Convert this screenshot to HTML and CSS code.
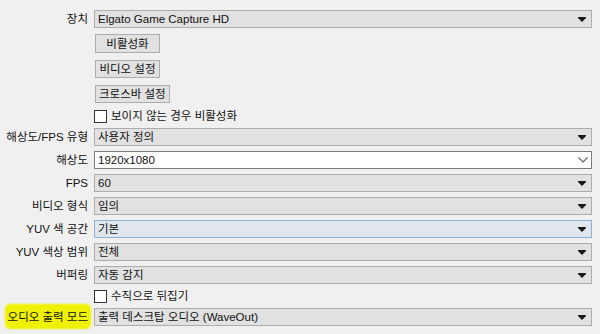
FILE: index.html
```html
<!DOCTYPE html>
<html lang="ko">
<head>
<meta charset="utf-8">
<link rel="stylesheet" href="styles.css">
</head>
<body>
<div class="form">
  <div class="row r-first">
    <div class="label">장치</div>
    <div class="combo"><span class="val">Elgato Game Capture HD</span><svg class="arrow" width="8" height="5" viewBox="0 0 8 5"><path d="M0 0H8V1L4 5L0 1Z" fill="#1a1a1a"/></svg></div>
  </div>
  <div class="row r-btn1">
    <div class="label"></div>
    <div><button class="btn">비활성화</button></div>
  </div>
  <div class="row r-btn">
    <div class="label"></div>
    <div><button class="btn">비디오 설정</button></div>
  </div>
  <div class="row r-btn">
    <div class="label"></div>
    <div><button class="btn">크로스바 설정</button></div>
  </div>
  <div class="row r-check">
    <div class="label"></div>
    <label class="check"><span class="box"></span>보이지 않는 경우 비활성화</label>
  </div>
  <div class="row r-after-check">
    <div class="label">해상도/FPS 유형</div>
    <div class="combo"><span class="val">사용자 정의</span><svg class="arrow" width="8" height="5" viewBox="0 0 8 5"><path d="M0 0H8V1L4 5L0 1Z" fill="#1a1a1a"/></svg></div>
  </div>
  <div class="row">
    <div class="label">해상도</div>
    <div class="combo edit"><span class="val">1920x1080</span><svg class="chev" width="10" height="6" viewBox="0 0 10 6"><path d="M0.5 0.5L5 5L9.5 0.5" fill="none" stroke="#606060" stroke-width="1.1"/></svg></div>
  </div>
  <div class="row">
    <div class="label">FPS</div>
    <div class="combo"><span class="val">60</span><svg class="arrow" width="8" height="5" viewBox="0 0 8 5"><path d="M0 0H8V1L4 5L0 1Z" fill="#1a1a1a"/></svg></div>
  </div>
  <div class="row">
    <div class="label">비디오 형식</div>
    <div class="combo"><span class="val">임의</span><svg class="arrow" width="8" height="5" viewBox="0 0 8 5"><path d="M0 0H8V1L4 5L0 1Z" fill="#1a1a1a"/></svg></div>
  </div>
  <div class="row">
    <div class="label">YUV 색 공간</div>
    <div class="combo focus"><span class="val">기본</span><svg class="arrow" width="8" height="5" viewBox="0 0 8 5"><path d="M0 0H8V1L4 5L0 1Z" fill="#1a1a1a"/></svg></div>
  </div>
  <div class="row">
    <div class="label">YUV 색상 범위</div>
    <div class="combo"><span class="val">전체</span><svg class="arrow" width="8" height="5" viewBox="0 0 8 5"><path d="M0 0H8V1L4 5L0 1Z" fill="#1a1a1a"/></svg></div>
  </div>
  <div class="row">
    <div class="label">버퍼링</div>
    <div class="combo"><span class="val">자동 감지</span><svg class="arrow" width="8" height="5" viewBox="0 0 8 5"><path d="M0 0H8V1L4 5L0 1Z" fill="#1a1a1a"/></svg></div>
  </div>
  <div class="row r-check2">
    <div class="label"></div>
    <label class="check"><span class="box"></span>수직으로 뒤집기</label>
  </div>
  <div class="row r-after-check">
    <div class="label"><span class="hl">오디오 출력 모드</span></div>
    <div class="combo"><span class="val">출력 데스크탑 오디오 (WaveOut)</span><svg class="arrow" width="8" height="5" viewBox="0 0 8 5"><path d="M0 0H8V1L4 5L0 1Z" fill="#1a1a1a"/></svg></div>
  </div>
</div>
</body>
</html>
```
FILE: styles.css
```css
html, body {
  margin: 0;
  padding: 0;
  background: #f0f0f0;
}
body {
  width: 600px;
  height: 334px;
  overflow: hidden;
  font-family: "Liberation Sans", "Noto Sans CJK KR", sans-serif;
  font-size: 11.5px;
  color: #111;
}
.form {
  display: flex;
  flex-direction: column;
  padding-top: 10px;
}
.row {
  display: grid;
  grid-template-columns: 88px 498px;
  column-gap: 6px;
  align-items: center;
  height: 18px;
  margin-top: 5px;
}
.row.r-first { margin-top: 0; }
.row.r-btn1 { margin-top: 6px; height: 19px; }
.row.r-btn { margin-top: 7px; }
.row.r-check { margin-top: 4px; }
.row.r-check2 { margin-top: 3px; }
.row.r-after-check { margin-top: 3px; }
.label {
  text-align: right;
  white-space: nowrap;
  line-height: 18px;
}
.combo {
  box-sizing: border-box;
  height: 18px;
  border: 1px solid #adadad;
  background: #e1e1e1;
  display: flex;
  align-items: center;
  justify-content: space-between;
  padding: 0 4px 0 3px;
}
.combo .val {
  line-height: 16px;
  white-space: nowrap;
}
.combo.edit {
  background: #ffffff;
  border-color: #7a7a7a;
  padding-right: 3px;
}
.combo.focus {
  background: #e2e7ee;
  border-color: #8cb0d6;
}
.arrow { display: block; margin-right: 1px; }
.chev { display: block; }
.btn {
  box-sizing: border-box;
  height: 18px;
  min-width: 65px;
  margin-left: 1px;
  padding: 0 3px;
  border: 1px solid #adadad;
  background: #e1e1e1;
  font: inherit;
  color: inherit;
  line-height: 16px;
}
.row.r-btn1 .btn { height: 19px; }
.check {
  display: flex;
  align-items: center;
  margin-left: 0;
  line-height: 18px;
}
.box {
  box-sizing: border-box;
  width: 13px;
  height: 13px;
  border: 1px solid #333333;
  background: #ffffff;
  margin-right: 4px;
}
.hl {
  background: #eef200;
  padding: 6px 2px 5px 2px;
  margin-right: -2px;
  border-radius: 4px;
  box-shadow: 0 0 2px 1px #f0f300;
}
```
